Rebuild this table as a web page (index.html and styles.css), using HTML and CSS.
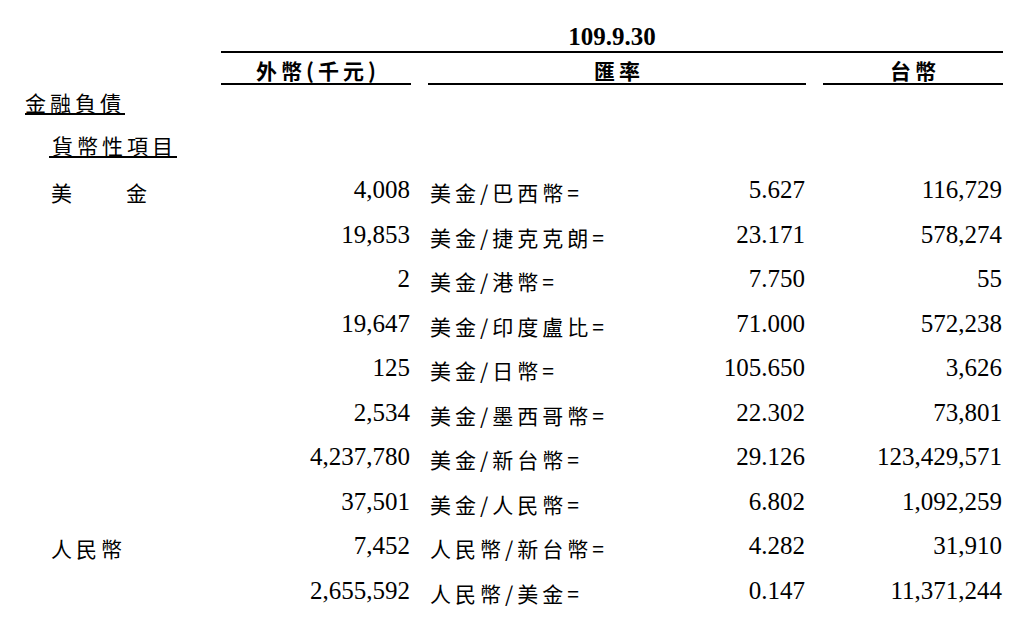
FILE: index.html
```html
<!DOCTYPE html>
<html lang="zh-Hant">
<head>
<meta charset="utf-8">
<title>金融負債</title>
<link rel="stylesheet" href="styles.css">
</head>
<body>
<div class="sheet">
  <div class="grid head">
    <div class="date">109.9.30</div>
    <div class="hcell first"><span class="hc">外幣(千元)</span></div>
    <div class="hcell"><span class="hc">匯率</span></div>
    <div class="hcell"><span class="hc">台幣</span></div>
  </div>
  <div class="sec sec1"><span class="ul">金融負債</span></div>
  <div class="sec sec2"><span class="ul ul2">貨幣性項目</span></div>

  <div class="grid row">
    <div class="lab"><span class="c">美　　金</span></div>
    <div class="num">4,008</div>
    <div class="rate"><div class="desc"><span class="c">美金/巴西幣=</span></div><div>5.627</div></div>
    <div class="twd">116,729</div>
  </div>
  <div class="grid row">
    <div class="lab"></div>
    <div class="num">19,853</div>
    <div class="rate"><div class="desc"><span class="c">美金/捷克克朗=</span></div><div>23.171</div></div>
    <div class="twd">578,274</div>
  </div>
  <div class="grid row">
    <div class="lab"></div>
    <div class="num">2</div>
    <div class="rate"><div class="desc"><span class="c">美金/港幣=</span></div><div>7.750</div></div>
    <div class="twd">55</div>
  </div>
  <div class="grid row">
    <div class="lab"></div>
    <div class="num">19,647</div>
    <div class="rate"><div class="desc"><span class="c">美金/印度盧比=</span></div><div>71.000</div></div>
    <div class="twd">572,238</div>
  </div>
  <div class="grid row">
    <div class="lab"></div>
    <div class="num">125</div>
    <div class="rate"><div class="desc"><span class="c">美金/日幣=</span></div><div>105.650</div></div>
    <div class="twd">3,626</div>
  </div>
  <div class="grid row">
    <div class="lab"></div>
    <div class="num">2,534</div>
    <div class="rate"><div class="desc"><span class="c">美金/墨西哥幣=</span></div><div>22.302</div></div>
    <div class="twd">73,801</div>
  </div>
  <div class="grid row">
    <div class="lab"></div>
    <div class="num">4,237,780</div>
    <div class="rate"><div class="desc"><span class="c">美金/新台幣=</span></div><div>29.126</div></div>
    <div class="twd">123,429,571</div>
  </div>
  <div class="grid row">
    <div class="lab"></div>
    <div class="num">37,501</div>
    <div class="rate"><div class="desc"><span class="c">美金/人民幣=</span></div><div>6.802</div></div>
    <div class="twd">1,092,259</div>
  </div>
  <div class="grid row">
    <div class="lab"><span class="c">人民幣</span></div>
    <div class="num">7,452</div>
    <div class="rate"><div class="desc"><span class="c">人民幣/新台幣=</span></div><div>4.282</div></div>
    <div class="twd">31,910</div>
  </div>
  <div class="grid row">
    <div class="lab"></div>
    <div class="num">2,655,592</div>
    <div class="rate"><div class="desc"><span class="c">人民幣/美金=</span></div><div>0.147</div></div>
    <div class="twd">11,371,244</div>
  </div>
</div>
</body>
</html>
```
FILE: styles.css
```css
html, body {
  margin: 0;
  padding: 0;
  background: #ffffff;
  color: #000000;
}

.sheet {
  width: 1003px;
  font-family: "Liberation Serif", "Times New Roman", serif;
}

.grid {
  display: grid;
  grid-template-columns: 204px 190px 378px 180px;
  column-gap: 17px;
}

.date {
  grid-column: 2 / 5;
  text-align: center;
  font-weight: 700;
  font-size: 25px;
  line-height: 25px;
  padding-top: 24px;
  padding-bottom: 2px;
  border-bottom: 2px solid #000;
}

.hcell {
  box-sizing: border-box;
  height: 32px;
  padding-top: 4px;
  line-height: 26px;
  text-align: center;
  border-bottom: 2px solid #000;
  font-family: "Noto Sans CJK TC", "Noto Sans CJK SC", sans-serif;
  font-weight: 700;
  font-size: 21px;
}

.hcell.first {
  grid-column: 2;
}

.hc {
  letter-spacing: 4px;
  padding-left: 4px;
}

.sec {
  box-sizing: border-box;
  font-family: "Noto Sans CJK TC", "Noto Sans CJK SC", sans-serif;
  font-size: 21px;
  letter-spacing: 4px;
}

.sec1 {
  height: 37px;
  padding: 2px 0 0 25px;
}

.sec2 {
  height: 46px;
  padding: 8px 0 0 49px;
}

.ul {
  display: inline-block;
  line-height: 22px;
  border-bottom: 2px solid #000;
}

.ul2 {
  padding-left: 3px;
}

.row {
  height: 44.5px;
  line-height: 44.5px;
  font-size: 25px;
  white-space: nowrap;
}

.lab {
  padding-left: 51px;
}

.num {
  text-align: right;
  padding-right: 1px;
}

.rate {
  display: flex;
  justify-content: space-between;
  padding-left: 2px;
  padding-right: 1px;
}

.twd {
  text-align: right;
  padding-right: 1px;
}

.c {
  font-family: "Noto Sans CJK TC", "Noto Sans CJK SC", sans-serif;
  font-size: 21px;
  letter-spacing: 4px;
  line-height: 1;
  vertical-align: -2.5px;
}
```
